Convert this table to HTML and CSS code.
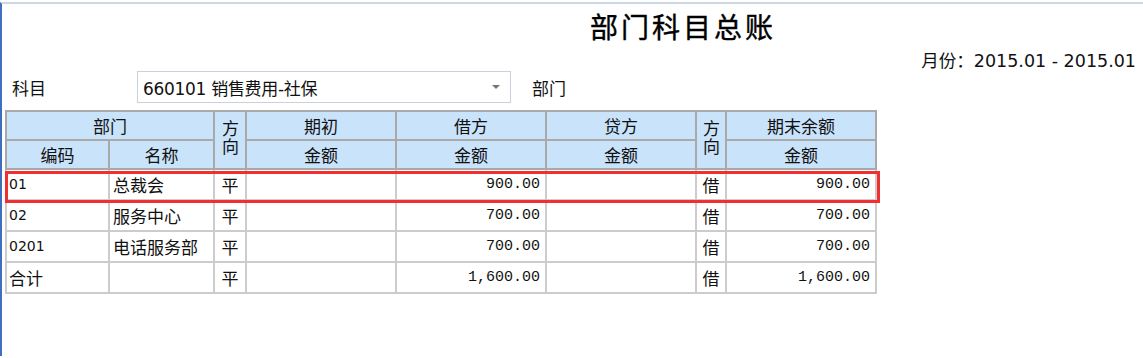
FILE: index.html
```html
<!DOCTYPE html>
<html lang="zh-CN">
<head>
<meta charset="utf-8">
<title>部门科目总账</title>
<link rel="stylesheet" href="styles.css">
</head>
<body>
<div class="window">
  <div class="title-row"><h1 class="title">部门科目总账</h1></div>
  <div class="period-row"><span class="period">月份：2015.01 - 2015.01</span></div>
  <div class="filter-row">
    <span class="label">科目</span>
    <div class="combo">
      <span class="combo-text">660101 销售费用-社保</span>
      <span class="combo-arrow"></span>
    </div>
    <span class="label dept">部门</span>
  </div>
  <div class="grid-wrap">
    <table class="grid">
      <colgroup>
        <col class="c-code"><col class="c-name"><col class="c-dir"><col class="c-amt"><col class="c-amt"><col class="c-amt"><col class="c-dir2"><col class="c-amt">
      </colgroup>
      <thead>
        <tr>
          <th colspan="2">部门</th>
          <th rowspan="2" class="vert"><span class="vtext">方向</span></th>
          <th>期初</th>
          <th>借方</th>
          <th>贷方</th>
          <th rowspan="2" class="vert"><span class="vtext">方向</span></th>
          <th>期末余额</th>
        </tr>
        <tr>
          <th>编码</th>
          <th>名称</th>
          <th>金额</th>
          <th>金额</th>
          <th>金额</th>
          <th>金额</th>
        </tr>
      </thead>
      <tbody>
        <tr>
          <td class="code">01</td><td class="name">总裁会</td><td class="dir">平</td>
          <td class="num"></td><td class="num">900.00</td><td class="num"></td><td class="dir">借</td><td class="num">900.00</td>
        </tr>
        <tr>
          <td class="code">02</td><td class="name">服务中心</td><td class="dir">平</td>
          <td class="num"></td><td class="num">700.00</td><td class="num"></td><td class="dir">借</td><td class="num">700.00</td>
        </tr>
        <tr>
          <td class="code">0201</td><td class="name">电话服务部</td><td class="dir">平</td>
          <td class="num"></td><td class="num">700.00</td><td class="num"></td><td class="dir">借</td><td class="num">700.00</td>
        </tr>
        <tr>
          <td class="code total">合计</td><td class="name"></td><td class="dir">平</td>
          <td class="num"></td><td class="num">1,600.00</td><td class="num"></td><td class="dir">借</td><td class="num">1,600.00</td>
        </tr>
      </tbody>
    </table>
    <div class="highlight"></div>
  </div>
</div>
</body>
</html>
```

FILE: styles.css
```css
html, body {
  margin: 0;
  padding: 0;
  background: #ffffff;
}

body {
  font-family: "Noto Sans CJK SC", "Noto Sans", sans-serif;
  color: #111;
  width: 1143px;
  height: 358px;
  overflow: hidden;
}

.window {
  margin-top: 2px;
  border-top: 2px solid #cdd7e6;
  border-left: 2px solid #3f6fbf;
  height: 354px;
  box-sizing: border-box;
}

.title-row {
  height: 44px;
  display: flex;
  align-items: center;
  padding-left: 588px;
}

.title {
  margin: 0;
  font-size: 28px;
  font-weight: 400;
  letter-spacing: 3px;
  line-height: 1;
  color: #000;
  -webkit-text-stroke: 0.4px #000;
}

.period-row {
  height: 22px;
  display: flex;
  justify-content: flex-end;
  align-items: center;
  padding-right: 7px;
}

.period {
  font-family: "DejaVu Sans", "Noto Sans CJK SC", sans-serif;
  font-size: 17.5px;
  color: #111;
}

.filter-row {
  display: flex;
  align-items: center;
  height: 32px;
  padding-left: 10px;
  margin-top: 1px;
}

.label {
  font-size: 17px;
  width: 125px;
}

.label.dept {
  width: auto;
  margin-left: 21px;
}

.combo {
  width: 374px;
  height: 32px;
  box-sizing: border-box;
  border: 1px solid #c9d1dd;
  display: flex;
  align-items: center;
  justify-content: space-between;
  padding: 0 10px 0 5px;
}

.combo-text {
  font-size: 17px;
  font-family: "DejaVu Sans", "Noto Sans CJK SC", sans-serif;
  letter-spacing: -0.3px;
}

.combo-arrow {
  width: 0;
  height: 0;
  border-left: 4px solid transparent;
  border-right: 4px solid transparent;
  border-top: 4px solid #777;
}

.grid-wrap {
  position: relative;
  margin-top: 7px;
  margin-left: 3px;
  width: 876px;
}

.grid {
  border-collapse: collapse;
  table-layout: fixed;
  width: 872px;
  font-size: 17px;
}

.c-code { width: 103px; }
.c-name { width: 105px; }
.c-dir { width: 32px; }
.c-dir2 { width: 30px; }
.c-amt { width: 150px; }

.grid th {
  background: #c9e3fb;
  border: 2px solid #a9a9a9;
  font-weight: 400;
  height: 27px;
  padding: 0;
  line-height: 27px;
  text-align: center;
}

.grid th.vert {
  vertical-align: middle;
  padding: 0;
}

.vtext {
  writing-mode: vertical-rl;
  text-orientation: upright;
  letter-spacing: 1px;
  font-size: 17px;
  line-height: 20px;
  display: inline-block;
  margin-top: 2px;
}

.grid td {
  border: 2px solid #cccccc;
  height: 29px;
  padding: 0 4px;
  line-height: 29px;
  white-space: nowrap;
  overflow: hidden;
}

.grid td.code {
  font-family: "DejaVu Sans", "Noto Sans CJK SC", sans-serif;
  font-size: 14px;
  padding-left: 2px;
}

.grid td.code.total {
  font-family: "Noto Sans CJK SC", sans-serif;
  font-size: 17px;
}

.grid td.name {
  font-size: 17px;
  padding-left: 3px;
}

.grid td.dir {
  text-align: center;
  font-size: 17px;
  padding: 0;
}

.grid td.num {
  text-align: right;
  font-family: "Liberation Mono", "DejaVu Sans Mono", monospace;
  font-size: 15px;
  padding-right: 5px;
}

.highlight {
  position: absolute;
  left: 0;
  top: 61px;
  width: 875px;
  height: 32px;
  box-sizing: border-box;
  border: 3px solid #f03030;
  pointer-events: none;
}
```
